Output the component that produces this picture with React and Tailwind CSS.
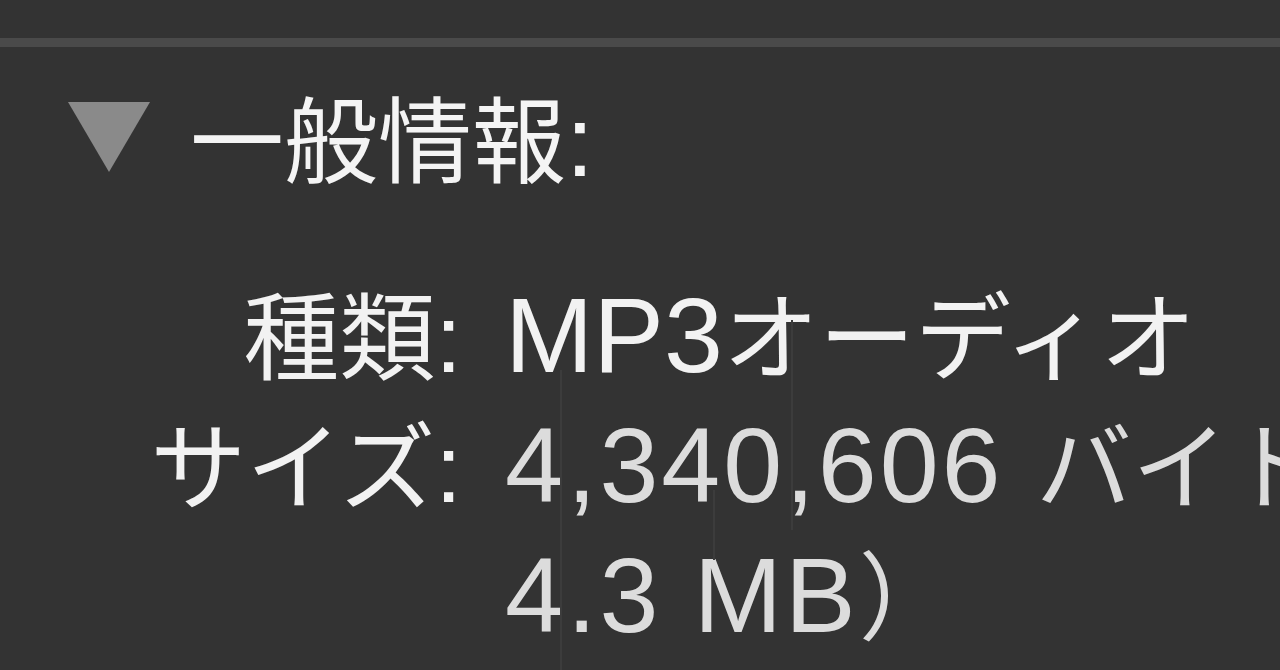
const font = { fontFamily: '"Liberation Sans", "Noto Sans CJK JP", sans-serif' };

// Latin runs are drawn larger and a little looser, like the system font next to Hiragino
function Latin({ children, wide }) {
  return (
    <span className={`text-[106px] leading-none ${wide ? 'tracking-[3px]' : ''}`}>{children}</span>
  );
}

export default function App() {
  return (
    <div className="relative w-[1280px] h-[670px] overflow-hidden bg-[#333333]" style={font}>
      {/* top separator */}
      <div className="pt-[38px]">
        <div className="h-[9px] bg-[#4a4a4a]" />
      </div>

      {/* section heading */}
      <div className="flex items-center mt-[44px] pl-[68px] h-[100px]">
        <svg width="82" height="70" viewBox="0 0 82 70" className="shrink-0 mb-[8px]">
          <polygon points="0,0 82,0 41,70" fill="#8a8a8a" />
        </svg>
        <span className="ml-[40px] text-[94px] leading-none text-[#f4f4f4] whitespace-nowrap">
          一般情報<span className="text-[100px]">:</span>
        </span>
      </div>

      {/* info rows */}
      <div className="mt-[83px] flex text-[96px] leading-[130px] whitespace-nowrap">
        <div className="w-[462px] shrink-0 flex flex-col text-right text-[#f2f2f2]">
          <span>種類:</span>
          <span>サイズ:</span>
        </div>
        <div className="ml-[43px] flex flex-col">
          <span className="text-[#f2f2f2]">
            <Latin>MP3</Latin>オーディオ
          </span>
          <span className="text-[#dcdcdc]">
            <Latin wide>4,340,606 </Latin>バイト（
          </span>
          <span className="text-[#dcdcdc]">
            <Latin wide>4.3 MB</Latin>）
          </span>
        </div>
      </div>

      {/* faint rendering streaks */}
      <div className="absolute left-[560px] top-[370px] w-[2px] h-[300px] bg-[#3c3c3c]" />
      <div className="absolute left-[713px] top-[490px] w-[2px] h-[70px] bg-[#3c3c3c]" />
      <div className="absolute left-[791px] top-[320px] w-[2px] h-[210px] bg-[#3c3c3c]" />
    </div>
  );
}
